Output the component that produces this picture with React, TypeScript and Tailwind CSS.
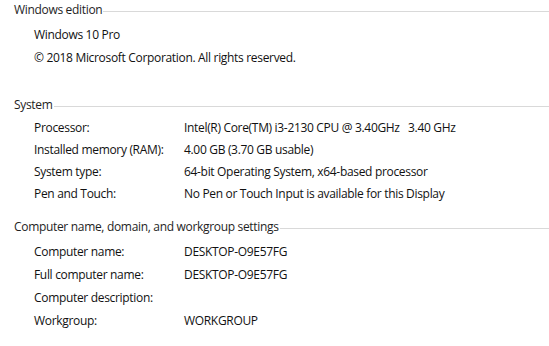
import React from "react";

const font = { fontFamily: '"Open Sans", "Noto Sans", sans-serif' };

function Heading({ title }: { title: string }) {
  return (
    <div className="flex items-center pl-[14px] h-[16px]">
      <span className="text-[12px] leading-[16px] text-[#1e1e1e] pr-[1px]">{title}</span>
      <div className="flex-1 h-px bg-[#d9d9d9] mt-[3px]" />
    </div>
  );
}

function Row({ label, value, h = "h-[22px]" }: { label: string; value?: string; h?: string }) {
  return (
    <div className={`flex items-center pl-[34px] text-[12px] text-[#111] ${h}`}>
      <span className="w-[150px] shrink-0">{label}</span>
      <span className="whitespace-pre">{value}</span>
    </div>
  );
}

export default function App() {
  return (
    <div className="w-[549px] h-[346px] bg-white overflow-hidden tracking-[-0.32px]" style={font}>
      <div className="pt-[2px]">
        <Heading title="Windows edition" />
      </div>
      <div className="mt-[5px] flex flex-col">
        <div className="pl-[34px] h-[23px] flex items-center text-[12px] text-[#111]">Windows 10 Pro</div>
        <div className="pl-[34px] h-[23px] flex items-center text-[12px] text-[#111]">© 2018 Microsoft Corporation. All rights reserved.</div>
      </div>

      <div className="mt-[28px]">
        <Heading title="System" />
      </div>
      <div className="mt-[4px] flex flex-col">
        <Row label="Processor:" value="Intel(R) Core(TM) i3-2130 CPU @ 3.40GHz   3.40 GHz" />
        <Row label="Installed memory (RAM):" value="4.00 GB (3.70 GB usable)" />
        <Row label="System type:" value="64-bit Operating System, x64-based processor" />
        <Row label="Pen and Touch:" value="No Pen or Touch Input is available for this Display" />
      </div>

      <div className="mt-[14px]">
        <Heading title="Computer name, domain, and workgroup settings" />
      </div>
      <div className="mt-[5px] flex flex-col">
        <Row h="h-[23px]" label="Computer name:" value="DESKTOP-O9E57FG" />
        <Row h="h-[23px]" label="Full computer name:" value="DESKTOP-O9E57FG" />
        <Row h="h-[23px]" label="Computer description:" />
        <Row h="h-[23px]" label="Workgroup:" value="WORKGROUP" />
      </div>
    </div>
  );
}
